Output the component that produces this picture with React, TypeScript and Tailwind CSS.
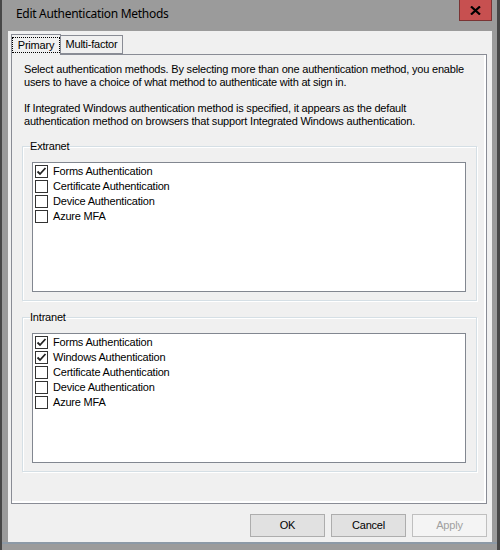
import { useState } from 'react';

interface Method {
  label: string;
  checked: boolean;
}

const EXTRANET: Method[] = [
  { label: 'Forms Authentication', checked: true },
  { label: 'Certificate Authentication', checked: false },
  { label: 'Device Authentication', checked: false },
  { label: 'Azure MFA', checked: false },
];

const INTRANET: Method[] = [
  { label: 'Forms Authentication', checked: true },
  { label: 'Windows Authentication', checked: true },
  { label: 'Certificate Authentication', checked: false },
  { label: 'Device Authentication', checked: false },
  { label: 'Azure MFA', checked: false },
];

const FONT = { fontFamily: '"Liberation Sans", Arial, sans-serif' };

function CheckBox({ checked, onToggle }: { checked: boolean; onToggle: () => void }) {
  return (
    <button
      type="button"
      onClick={onToggle}
      className="w-[13px] h-[13px] border border-[#333333] bg-white flex items-center justify-center shrink-0"
    >
      {checked && (
        <svg width="11" height="11" viewBox="0 0 11 11">
          <path d="M1.5 5.5 L4 8 L9.5 2" fill="none" stroke="#222" strokeWidth="1.8" />
        </svg>
      )}
    </button>
  );
}

function MethodList({ initial }: { initial: Method[] }) {
  const [items, setItems] = useState(initial);
  return (
    <div className="h-[130px] border border-[#828790] bg-white pt-[1px] pl-[2px]">
      {items.map((m, i) => (
        <div key={m.label} className="h-[15px] flex items-center gap-[5px]">
          <CheckBox
            checked={m.checked}
            onToggle={() =>
              setItems((prev) => prev.map((p, j) => (j === i ? { ...p, checked: !p.checked } : p)))
            }
          />
          <span className="text-[11px] leading-[13px] tracking-[-0.2px] text-black">{m.label}</span>
        </div>
      ))}
    </div>
  );
}

function GroupBox({ title, children }: { title: string; children: React.ReactNode }) {
  return (
    <fieldset className="border border-[#d5dfe5] pl-[9px] pr-[10px] pb-[8px] pt-[9px] shadow-[inset_1px_1px_0_#ffffff,1px_1px_0_#ffffff]">
      <legend className="ml-[-2px] px-0 text-[11px] leading-[13px] tracking-[-0.2px] text-black">{title}</legend>
      {children}
    </fieldset>
  );
}

function DialogButton({ label, disabled }: { label: string; disabled?: boolean }) {
  return (
    <button
      type="button"
      disabled={disabled}
      className={`w-[75px] h-[23px] border text-[11px] tracking-[-0.2px] ${
        disabled
          ? 'border-[#bfbfbf] bg-[#f4f4f4] text-[#a0a0a0]'
          : 'border-[#adadad] bg-[#e1e1e1] text-black'
      }`}
    >
      {label}
    </button>
  );
}

export default function App() {
  const [tab, setTab] = useState<'primary' | 'mfa'>('primary');

  return (
    <div
      className="w-[500px] h-[550px] bg-[#9b9b9b] border-l-2 border-r-[3px] border-[#474747] flex flex-col"
      style={FONT}
    >
      {/* Title bar */}
      <div className="h-[31px] flex justify-between shrink-0">
        <div
          className="pl-[14px] pt-[6px] text-[12px] leading-[16px] tracking-[-0.3px] text-black"
          style={{ fontFamily: '"Noto Sans", "Open Sans", sans-serif' }}
        >
          Edit Authentication Methods
        </div>
        <button
          type="button"
          className="w-[33px] h-[21px] mr-[5px] bg-[#c75050] border border-t-0 border-[#7a3434] flex items-center justify-center"
        >
          <svg width="11" height="9" viewBox="0 0 11 9">
            <path d="M1 0.5 L10 8.5 M10 0.5 L1 8.5" stroke="#000" strokeWidth="2.2" />
          </svg>
        </button>
      </div>

      {/* Client area */}
      <div className="ml-[6px] mr-[5px] h-[511px] bg-[#f0f0f0] pl-[3px] pr-[5px] pt-[3px] flex flex-col">
        {/* Tabs */}
        <div className="flex items-end h-[21px] relative z-10">
          <button
            type="button"
            onClick={() => setTab('primary')}
            className={`w-[50px] border border-[#898c95] bg-[#f0f0f0] text-[11px] tracking-[-0.2px] text-black flex items-center justify-center ${
              tab === 'primary' ? 'h-[21px] border-b-0' : 'h-[19px] mb-[1px]'
            }`}
          >
            <span
              className={`px-[5px] leading-[14px] ${tab === 'primary' ? 'outline outline-1 outline-dotted outline-black' : ''}`}
            >
              Primary
            </span>
          </button>
          <button
            type="button"
            onClick={() => setTab('mfa')}
            className={`w-[62px] border border-l-0 border-[#898c95] bg-[#f0f0f0] text-[11px] tracking-[-0.2px] text-black flex items-center justify-center ${
              tab === 'mfa' ? 'h-[21px] border-b-0' : 'h-[19px] mb-[1px]'
            }`}
          >
            Multi-factor
          </button>
        </div>

        {/* Tab panel */}
        <div className="mt-[-1px] h-[450px] border border-[#898c95] shadow-[inset_-2px_-2px_0_#ffffff] pl-[10px] pr-[9px] pt-[8px]">
          {tab === 'primary' && (
            <>
              <div className="px-[2px] text-[11px] leading-[13px] tracking-[-0.2px] text-black whitespace-nowrap">
                <p>
                  Select authentication methods. By selecting more than one authentication method, you enable
                  <br />
                  users to have a choice of what method to authenticate with at sign in.
                </p>
                <p className="mt-[13px]">
                  If Integrated Windows authentication method is specified, it appears as the default
                  <br />
                  authentication method on browsers that support Integrated Windows authentication.
                </p>
              </div>
              <div className="mt-[12px]">
                <GroupBox title="Extranet">
                  <MethodList initial={EXTRANET} />
                </GroupBox>
              </div>
              <div className="mt-[10px]">
                <GroupBox title="Intranet">
                  <MethodList initial={INTRANET} />
                </GroupBox>
              </div>
            </>
          )}
        </div>

        {/* Buttons */}
        <div className="mt-[10px] flex justify-end gap-[6px]">
          <DialogButton label="OK" />
          <DialogButton label="Cancel" />
          <DialogButton label="Apply" disabled />
        </div>
      </div>
      <div className="border-t-2 border-[#8c99a6]" />
    </div>
  );
}
